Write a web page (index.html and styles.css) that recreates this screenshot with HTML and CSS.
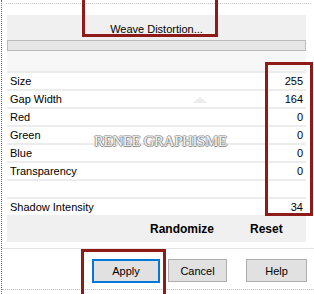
FILE: index.html
```html
<!DOCTYPE html>
<html lang="en">
<head>
    <meta charset="UTF-8"/>
    <title>Weave Distortion</title>
    <link rel="stylesheet" href="styles.css">
</head>
<body>
<div class="window">
    <div class="top-rule"></div>
    <div class="effect-bar"><span>Weave Distortion...</span></div>
    <div class="progress"></div>
    <div class="list-head"></div>

    <ul class="params">
        <li><span>Size</span><span>255</span></li>
        <li><span>Gap Width</span><span>164</span></li>
        <li><span>Red</span><span>0</span></li>
        <li><span>Green</span><span>0</span></li>
        <li><span>Blue</span><span>0</span></li>
        <li><span>Transparency</span><span>0</span></li>
        <li></li>
        <li><span>Shadow Intensity</span><span>34</span></li>
    </ul>

    <div class="actions">
        <span>Randomize</span>
        <span>Reset</span>
    </div>

    <div class="buttons">
        <button class="primary" type="button">Apply</button>
        <button class="cancel" type="button">Cancel</button>
        <button class="help" type="button">Help</button>
    </div>
    <div class="bottom-rule"></div>

    <!-- overlays: watermark and red annotation boxes -->
    <div class="triangle"></div>
    <div class="watermark">RENEE GRAPHISME</div>
    <div class="callout callout-title"></div>
    <div class="callout callout-values"></div>
    <div class="callout callout-apply"></div>
</div>
</body>
</html>
```
FILE: styles.css
```css
* {
    box-sizing: border-box;
}

html, body {
    margin: 0;
}

body {
    width: 314px;
    height: 294px;
    overflow: hidden;
    background-color: #fff;
    font-family: 'Liberation Sans', Arial, sans-serif;
    font-size: 11px;
    color: #000;
}

.window {
    position: relative;
    height: 294px;
    overflow: hidden;
    margin-left: 1px;
    border-left: 1px dotted #666;
    padding-top: 3px;
}

.top-rule {
    margin: 0 3px 0 4px;
    border-top: 1px dotted #c4c4c4;
}

.effect-bar {
    margin: 11px 8px 0 5px;
    height: 25px;
    background-color: #f0f0f0;
    display: flex;
    align-items: center;
    justify-content: center;
    padding-top: 2px;
}

.progress {
    margin: 0 8px 0 5px;
    height: 11px;
    border: 1px solid #bcbcbc;
    background-color: #e6e6e6;
}

.list-head {
    margin: 0 8px 0 5px;
    height: 20px;
    background-color: #f7f7f7;
}

.params {
    list-style: none;
    margin: 0 8px 0 5px;
    padding: 0;
}

.params li {
    height: 18px;
    border-top: 2px solid #ececec;
    background-color: #fff;
    display: flex;
    align-items: center;
    justify-content: space-between;
    padding: 0 3px;
}

.actions {
    margin: 0 8px 0 5px;
    height: 27px;
    background-color: #f0f0f0;
    display: flex;
    align-items: center;
    gap: 36px;
    padding-left: 143px;
    font-size: 12px;
    font-weight: bold;
}

.buttons {
    margin-top: 6px;
    border-top: 1px solid #e3e3e3;
    padding: 10px 0 0 90px;
    display: flex;
    align-items: flex-start;
}

button {
    font-family: inherit;
    font-size: 11px;
    color: #000;
    height: 23px;
    padding: 0;
    border: 1px solid #adadad;
    background-color: #e1e1e1;
}

.primary {
    width: 68px;
    height: 24px;
    border: 2px solid #0078d7;
    margin-right: 8px;
}

.cancel {
    width: 59px;
    margin-right: 19px;
}

.help {
    width: 61px;
}

.bottom-rule {
    margin-top: 6px;
    border-top: 1px dotted #bdbdbd;
}

.triangle {
    position: absolute;
    left: 191px;
    top: 97px;
    border-left: 7px solid transparent;
    border-right: 7px solid transparent;
    border-bottom: 6px solid #ececec;
}

.watermark {
    position: absolute;
    left: 92px;
    top: 133px;
    font-family: 'Liberation Serif', 'Times New Roman', serif;
    font-size: 15px;
    letter-spacing: -0.4px;
    color: #f2f2f2;
    text-shadow: 1px 0 #8a8a8a, -1px 0 #a0a0a0, 0 1px #8a8a8a, 0 -1px #b0b0b0;
}

.callout {
    position: absolute;
    border: 3px solid #8e1b17;
}

.callout-title {
    left: 80px;
    top: 0;
    width: 136px;
    height: 37px;
    border-top: none;
}

.callout-values {
    left: 263px;
    top: 62px;
    width: 48px;
    height: 154px;
}

.callout-apply {
    left: 79px;
    top: 249px;
    width: 85px;
    height: 45px;
    border-bottom: none;
}
```
